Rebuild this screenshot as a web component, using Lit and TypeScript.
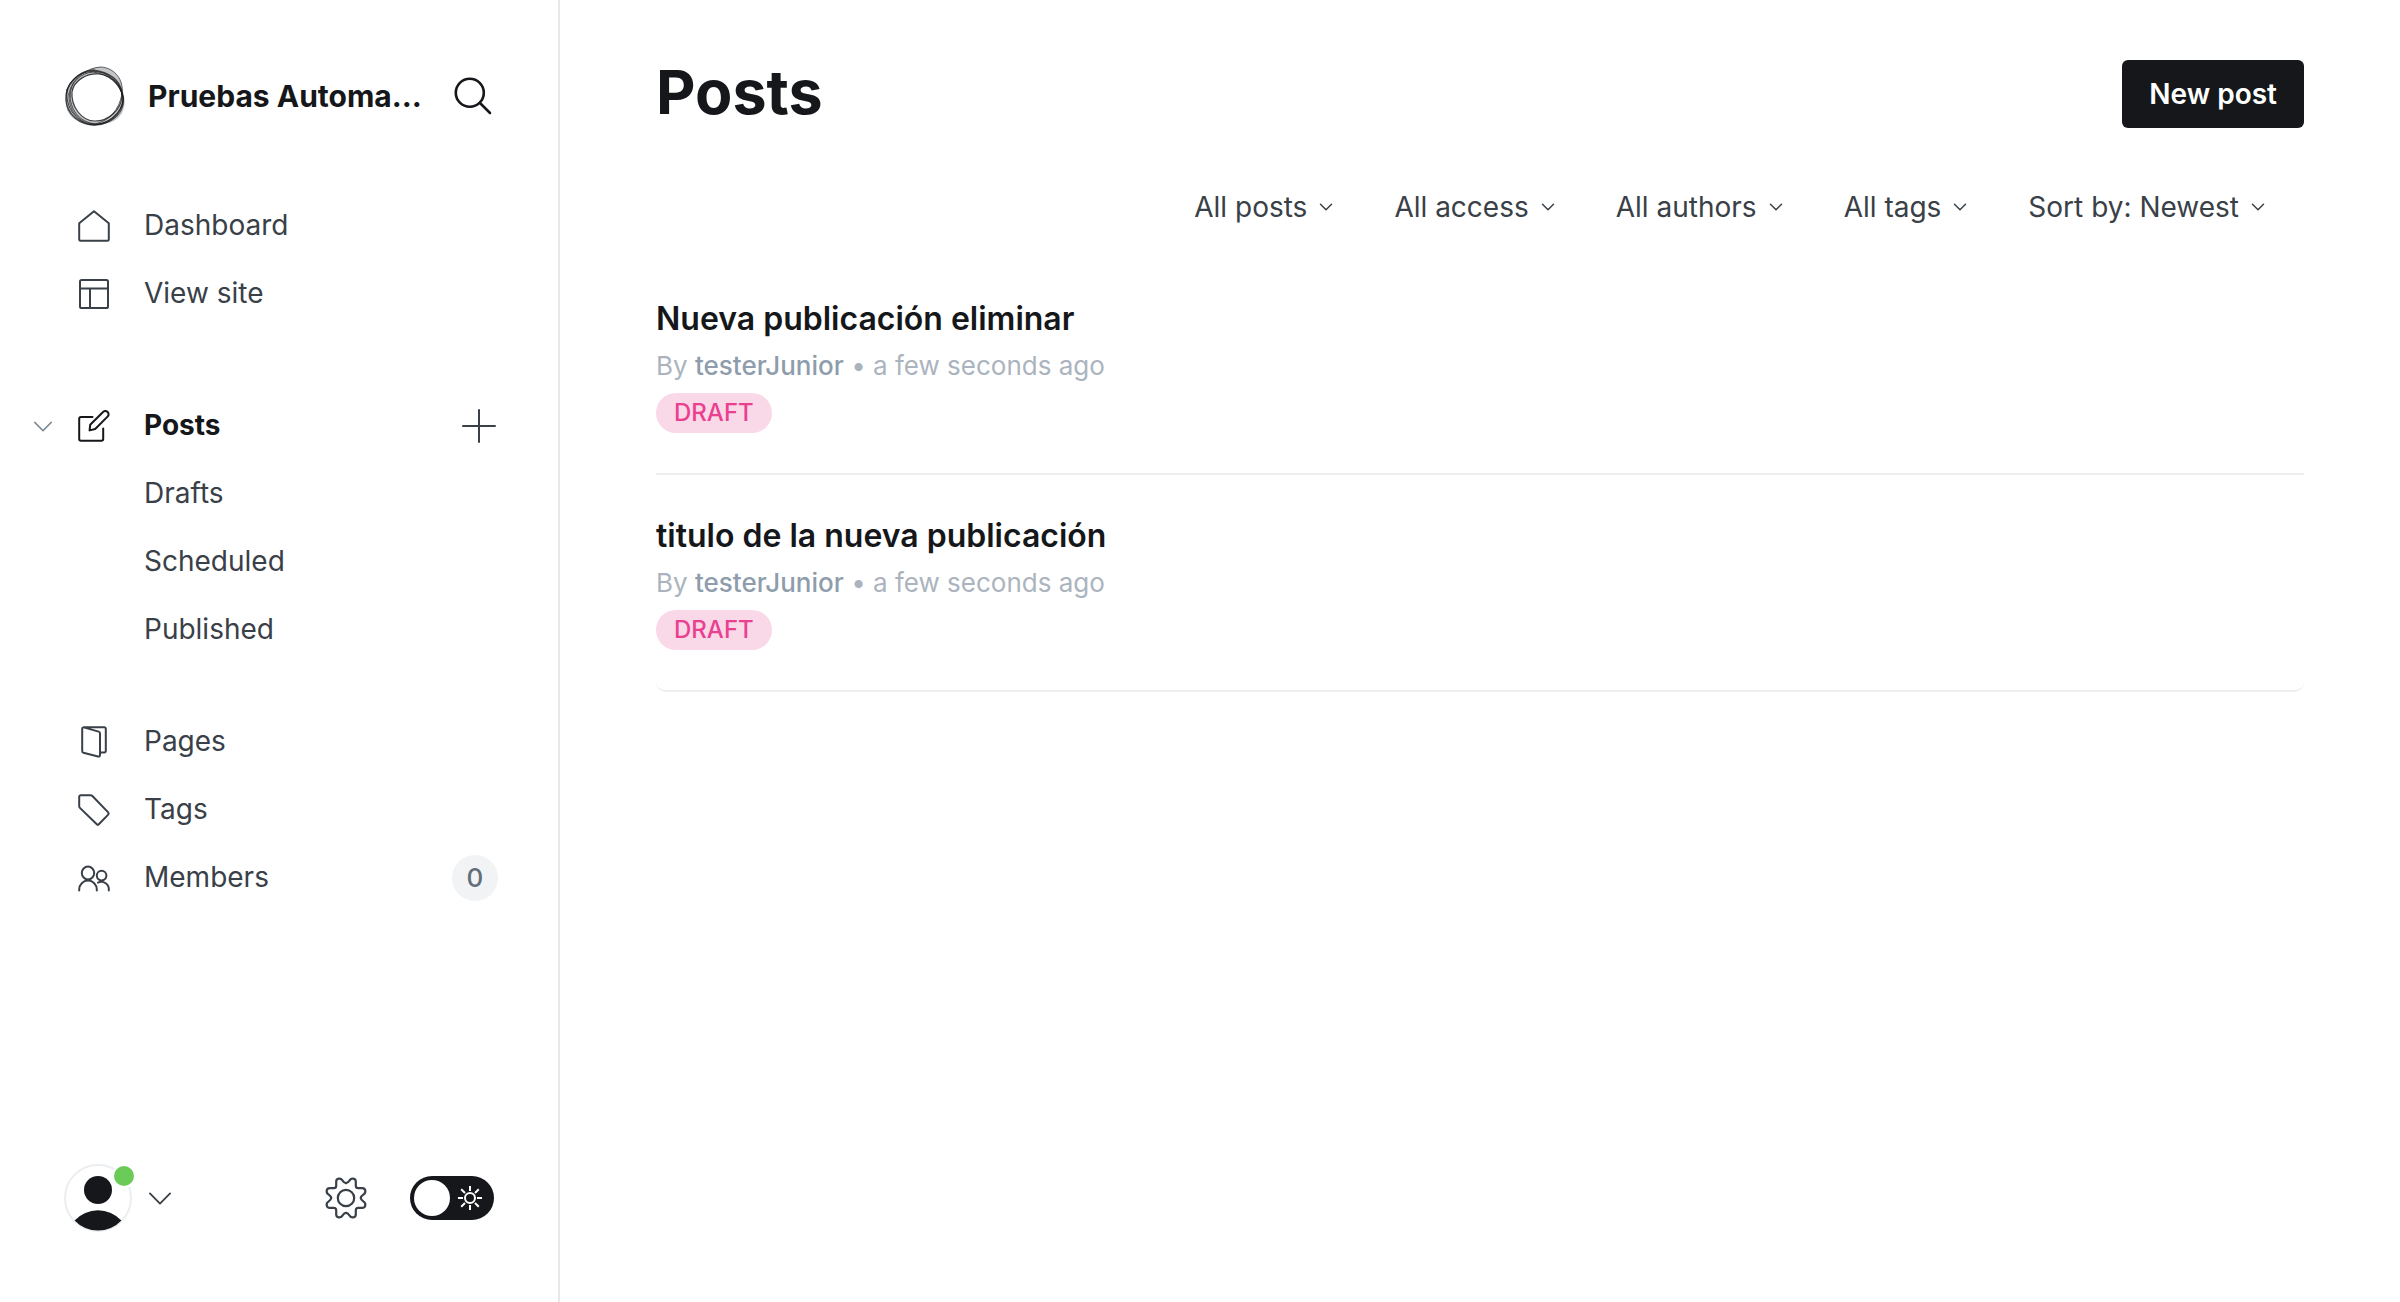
import { LitElement, html, css, svg, nothing } from "lit";
import { customElement } from "lit/decorators.js";

const icons: Record<string, unknown> = {
  home: svg`<path d="M1.2 13.2 L16 1.2 L30.8 13.2 V29.4 A1.4 1.4 0 0 1 29.4 30.8 H2.6 A1.4 1.4 0 0 1 1.2 29.4 Z"/>`,
  site: svg`<rect x="2" y="2" width="28" height="28" rx="1.6"/><path d="M2 10.5 H30 M12 10.5 V30"/>`,
  posts: svg`<path d="M14.5 7 H3 A1.8 1.8 0 0 0 1.2 8.8 V29 A1.8 1.8 0 0 0 3 30.8 H23.4 A1.8 1.8 0 0 0 25.2 29 V18.6 M11.6 20.4 L12.2 14.8 L24.8 2.2 A3 3 0 0 1 29.8 6.4 L17.2 19 Z"/>`,
  pages: svg`<path d="M4.2 2.8 Q4.2 1.2 5.8 1.4 L20.6 5.6 Q22 6 22 7.4 V29 Q22 31 20 30.5 L5.4 26.8 Q4.2 26.4 4.2 25 Z M5.6 1.2 H26.4 A1.4 1.4 0 0 1 27.8 2.6 V25 A1.4 1.4 0 0 1 26.4 26.4 H22"/>`,
  tags: svg`<path d="M1.2 2.8 A1.6 1.6 0 0 1 2.8 1.2 H12.6 Q13.6 1.2 14.4 2 L30.2 18.4 Q31.2 19.6 30.2 20.6 L20.8 30.2 Q19.8 31.2 18.8 30.2 L1.9 13.9 Q1.2 13.2 1.2 12.2 Z"/>`,
  members: svg`<ellipse cx="10" cy="11" rx="6.2" ry="6.4"/><path d="M1.2 28.4 V27.4 A8.8 8.8 0 0 1 18.8 27.4 V28.4"/><circle cx="23.6" cy="13.6" r="4.8"/><path d="M20 20.6 A7.6 7.6 0 0 1 30.8 28.4"/>`,
};

const glyph = (name: string) =>
  html`<svg class="glyph" viewBox="0 0 32 32" aria-hidden="true">${icons[name]}</svg>`;

const chevron = (cls: string) =>
  html`<svg class=${cls} viewBox="0 0 24 14" aria-hidden="true"><path d="M1 1.5 L12 12.5 L23 1.5"/></svg>`;

/* A quarter of the gear outline, from the top valley to the right one. */
const gearQuarter =
  "M0 -14.8 C1.5 -14.8 2.5 -16 3.6 -17.6 C5.2 -20.2 9.8 -20 9.8 -16.2 V-12.2 Q9.8 -9.8 12.2 -9.8 H16.2 C20 -9.8 20.2 -5.2 17.6 -3.6 C16 -2.5 14.8 -1.5 14.8 0";

/* Closed loops of the woven ring logo. */
const loops = [
  { d: "M7 26 C9 14 22 7 34 8 C48 10 57 20 57 30 C56 44 44 55 30 55 C16 55 6 40 7 26 Z", w: 1.2, o: 0.8 },
  { d: "M1 34 C0 18 14 5 28 4 C42 6 54 12 57 26 C62 42 48 58 30 59 C14 59 2 48 1 34 Z", w: 1.6, o: 0.75 },
  { d: "M2 24 C6 10 22 3 34 6 C46 8 56 20 58 32 C58 46 44 58 28 59 C12 57 0 42 2 24 Z", w: 1, o: 0.8 },
  { d: "M4 28 C6 14 20 2 36 1 C50 2 59 14 57 28 C54 44 44 55 30 58 C14 58 3 44 4 28 Z", w: 1, o: 0.65 },
  { d: "M5 30 C5 16 16 7 28 6 C44 8 54 18 58 30 C61 44 50 57 34 58 C16 58 6 46 5 30 Z", w: 1, o: 0.7 },
];

interface Post {
  title: string;
  author: string;
  when: string;
  status: string;
}

const posts: Post[] = [
  { title: "Nueva publicación eliminar", author: "testerJunior", when: "a few seconds ago", status: "DRAFT" },
  { title: "titulo de la nueva publicación", author: "testerJunior", when: "a few seconds ago", status: "DRAFT" },
];

const shared = css`
  *, *::before, *::after { box-sizing: border-box; }
  a { color: inherit; text-decoration: none; }
  button { margin: 0; padding: 0; border: 0; background: none; color: inherit; font: inherit; cursor: pointer; }
  svg { display: block; fill: none; stroke: currentColor; stroke-linecap: round; stroke-linejoin: round; flex: none; overflow: visible; }
`;

@customElement("admin-sidebar")
class AdminSidebar extends LitElement {
  static styles = [shared, css`
    :host { display: flex; flex-direction: column; border-right: 2px solid #e7e8e9; color: #394047; font-size: 28px; line-height: 36px; }
    .brand { display: flex; align-items: center; gap: 22px; padding: 62px 66px 0 64px; height: 130px; }
    .logo { width: 62px; height: 62px; color: #15171a; }
    .name { flex: 1; white-space: nowrap; color: #15171a; font-size: 30px; font-weight: 700; }
    .search { width: 38px; height: 38px; stroke-width: 2.6; color: #15171a; }
    nav { flex: 1; padding-top: 62px; }
    ul { margin: 0 0 64px; padding: 0; list-style: none; }
    ul.sections { margin-top: -20px; }
    li { display: flex; align-items: center; height: 68px; padding: 0 60px 0 34px; }
    li a { display: flex; align-items: center; flex: 1; padding-left: 44px; }
    li.open a { padding-left: 24px; color: #15171a; font-weight: 700; }
    li.child a { padding-left: 110px; }
    .label { padding-bottom: 2px; }
    .glyph { width: 32px; height: 32px; margin-right: 34px; stroke-width: 2; }
    .toggle-children { width: 20px; color: #7c8b9a; }
    .chev-sm { width: 18px; height: 11px; stroke-width: 2; }
    .plus { width: 34px; height: 34px; margin-right: 2px; stroke-width: 2; }
    .count { min-width: 46px; height: 46px; border-radius: 23px; background: #f1f3f4; color: #626d79; font-size: 26px; font-weight: 500; line-height: 46px; text-align: center; }
    footer { display: flex; align-items: center; padding: 0 64px 70px; }
    .user { display: flex; align-items: center; gap: 17px; }
    .avatar { position: relative; display: block; width: 68px; height: 68px; border: 2px solid #ebeef0; border-radius: 50%; color: #15171a; }
    .avatar svg { width: 64px; height: 64px; }
    .dot { position: absolute; top: 0; right: -4px; width: 20px; height: 20px; border-radius: 50%; background: #6bcb58; box-shadow: 0 0 0 2px #fff; }
    .chev { width: 22px; height: 13px; stroke-width: 2; }
    .settings { margin-left: auto; }
    .gear { width: 40px; height: 40px; stroke-width: 2.2; }
    .theme { position: relative; display: block; width: 84px; height: 44px; margin-left: 44px; }
    .theme input { display: block; width: 84px; height: 44px; margin: 0; appearance: none; border-radius: 22px; background: #15171a; cursor: pointer; }
    .theme input::before { content: ""; display: block; width: 36px; height: 36px; margin: 4px; border-radius: 50%; background: #fff; float: left; }
    .sun { position: absolute; top: 10px; right: 12px; width: 24px; height: 24px; color: #fff; stroke-width: 2; pointer-events: none; }
    .sun path { stroke-linecap: butt; }
  `];

  private item(label: string, icon: string, extra: unknown = nothing) {
    return html`<li><a href="#">${glyph(icon)}<span class="label">${label}</span></a>${extra}</li>`;
  }

  render() {
    return html`
      <div class="brand">
        <svg class="logo" viewBox="-1 -1 62 62" aria-hidden="true">
          <path fill="currentColor" fill-opacity=".25" stroke="none" fill-rule="evenodd" d="M1 34 C0 18 12 7 24 4 C34 -2 50 1 56 16 C57 22 58 26 59 30 C62 44 54 56 42 57 C28 62 8 58 2 44 C1 40 1 38 1 34 Z M7 26 C6 40 16 55 30 55 C44 55 56 44 57 30 C57 20 48 10 34 8 C22 7 9 14 7 26 Z"/>
          ${loops.map((l) => svg`<path d=${l.d} stroke-width=${l.w} stroke-opacity=${l.o}/>`)}
        </svg>
        <span class="name">Pruebas Automa…</span>
        <button aria-label="Search">
          <svg class="search" viewBox="0 0 38 38" aria-hidden="true"><circle cx="15.8" cy="15.8" r="14"/><path d="M26 26 L36 36"/></svg>
        </button>
      </div>
      <nav>
        <ul>${this.item("Dashboard", "home")}${this.item("View site", "site")}</ul>
        <ul>
          <li class="open">
            <button class="toggle-children" aria-label="Collapse posts">${chevron("chev-sm")}</button>
            <a href="#" aria-current="page">${glyph("posts")}<span class="label">Posts</span></a>
            <button aria-label="Add post"><svg class="plus" viewBox="0 0 34 34" aria-hidden="true"><path d="M17 1 V33 M1 17 H33"/></svg></button>
          </li>
          ${["Drafts", "Scheduled", "Published"].map((t) => html`<li class="child"><a href="#"><span class="label">${t}</span></a></li>`)}
        </ul>
        <ul class="sections">
          ${this.item("Pages", "pages")}${this.item("Tags", "tags")}
          ${this.item("Members", "members", html`<span class="count">0</span>`)}
        </ul>
      </nav>
      <footer>
        <button class="user" aria-label="Account menu">
          <span class="avatar">
            <svg viewBox="0 0 64 64" aria-hidden="true"><g fill="currentColor" stroke="none"><circle cx="32" cy="24" r="14"/><path d="M8.6 54.4 A32 32 0 0 1 55.4 54.4 A32 32 0 0 1 8.6 54.4 Z"/></g></svg>
            <span class="dot"></span>
          </span>
          ${chevron("chev")}
        </button>
        <a class="settings" href="#" aria-label="Settings">
          <svg class="gear" viewBox="-20 -20 40 40" aria-hidden="true">
            <circle r="8.2"/>
            ${[0, 90, 180, 270].map((a) => svg`<path d=${gearQuarter} transform=${`rotate(${a})`}/>`)}
          </svg>
        </a>
        <label class="theme">
          <input type="checkbox" role="switch" aria-label="Dark mode" />
          <svg class="sun" viewBox="0 0 24 24" aria-hidden="true"><circle cx="12" cy="12" r="5"/><path d="M12 0 V5 M12 19 V24 M0 12 H5 M19 12 H24 M3.2 3.2 L7 7 M17 17 L20.8 20.8 M3.2 20.8 L7 17 M17 7 L20.8 3.2"/></svg>
        </label>
      </footer>
    `;
  }
}

@customElement("posts-screen")
class PostsScreen extends LitElement {
  static styles = [shared, css`
    :host { display: block; padding: 60px 96px; color: #394047; font-size: 28px; line-height: 36px; }
    header { display: flex; align-items: flex-start; justify-content: space-between; height: 68px; }
    h1 { margin: 0; color: #15171a; font-size: 61px; line-height: 64px; font-weight: 700; }
    .new { height: 68px; padding: 0 27px; border-radius: 6px; background: #15171a; color: #fff; font-weight: 600; line-height: 68px; }
    .filters { display: flex; justify-content: flex-end; gap: 62px; padding: 61px 40px 0 0; }
    .filters button { display: flex; align-items: center; gap: 13px; }
    .chev { width: 12px; height: 8px; stroke-width: 3; }
    ol { margin: 45px 0 0; padding: 0; list-style: none; }
    li { padding: 39px 0 40px; border-bottom: 2px solid #eeeeef; }
    li:first-child { padding-top: 27px; }
    li:last-child { border-radius: 10px; }
    h2 { margin: 0; color: #15171a; font-size: 32px; line-height: 44px; font-weight: 600; }
    p { margin: 3px 0 5px; color: #abb4be; font-size: 26px; line-height: 44px; }
    strong { color: #8e9cac; font-weight: 500; }
    .status { display: block; width: fit-content; padding: 0 18px; border-radius: 20px; background: #f9d9e8; color: #eb4090; font-size: 24px; font-weight: 500; line-height: 40px; }
  `];

  render() {
    return html`
      <header><h1>Posts</h1><a class="new" href="#">New post</a></header>
      <div class="filters">
        ${["All posts", "All access", "All authors", "All tags", "Sort by: Newest"].map(
          (f) => html`<button aria-haspopup="listbox"><span>${f}</span>${chevron("chev")}</button>`,
        )}
      </div>
      <ol>
        ${posts.map((p) => html`<li>
          <a href="#">
            <h2>${p.title}</h2>
            <p>By <strong>${p.author}</strong> • ${p.when}</p>
            <span class="status">${p.status}</span>
          </a>
        </li>`)}
      </ol>
    `;
  }
}

@customElement("app-root")
class AppRoot extends LitElement {
  static styles = css`
    :host { display: grid; grid-template-columns: 560px minmax(0, 1fr); min-height: 100vh; background: #fff; font-family: Inter, "Liberation Sans", sans-serif; }
  `;

  render() {
    return html`<admin-sidebar></admin-sidebar><posts-screen></posts-screen>`;
  }
}
